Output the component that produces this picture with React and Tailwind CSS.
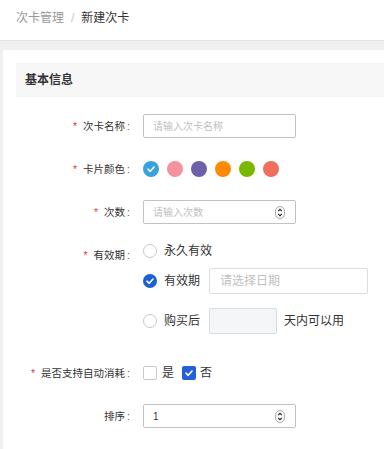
import React from "react";

const font = { fontFamily: '"Liberation Sans", "Noto Sans CJK SC", sans-serif' };

function Spinner() {
  return (
    <svg width="10" height="13" viewBox="0 0 10 13" className="shrink-0">
      <rect x="0.5" y="0.5" width="9" height="12" rx="4.5" fill="#fafafa" stroke="#9a9a9a" strokeWidth="0.8" />
      <path d="M3.2 5 L5 3.3 L6.8 5" fill="none" stroke="#333" strokeWidth="1.1" />
      <path d="M3.2 8 L5 9.7 L6.8 8" fill="none" stroke="#333" strokeWidth="1.1" />
    </svg>
  );
}

function Check({ size = 10 }) {
  return (
    <svg width={size} height={size} viewBox="0 0 10 10">
      <path d="M2 5.2 L4.2 7.3 L8 3" fill="none" stroke="#fff" strokeWidth="1.6" strokeLinecap="round" strokeLinejoin="round" />
    </svg>
  );
}

function Label({ required, children, className = "" }) {
  return (
    <div className={"w-[128px] shrink-0 flex justify-end text-[10.5px] text-[#333] leading-[16px] pr-[1px] " + className}>
      {required && <span className="text-[#e5383b] mr-[6px]">*</span>}
      <span>{children}</span>
      <span className="ml-[2px] text-[#555]">:</span>
    </div>
  );
}

function Radio({ checked }) {
  return checked ? (
    <div className="w-[14px] h-[14px] rounded-full bg-[#1c5fd7] flex items-center justify-center shrink-0">
      <Check size={10} />
    </div>
  ) : (
    <div className="w-[14px] h-[14px] rounded-full border border-[#c8c8c8] bg-white shrink-0" />
  );
}

export default function App() {
  const colors = ["#37a2df", "#f4939d", "#6f5faa", "#ff8a00", "#7ab800", "#f26e5c"];
  return (
    <div className="w-full h-[449px] overflow-hidden bg-[#f0f0f0]" style={font}>
      <div className="h-[41px] bg-white border-b border-[#e3e3e3] flex items-center pl-[16px] text-[12px] pb-[5px]">
        <span className="text-[#999]">次卡管理</span>
        <span className="text-[#c4c4c4] mx-[7px]">/</span>
        <span className="text-[#333]">新建次卡</span>
      </div>
      <div className="pt-[9px] pl-[3px]">
        <div className="bg-white h-[420px] pt-[13px]">
          <div className="ml-[13px] h-[34px] bg-[#f7f7f7] flex items-center pl-[9px] text-[12px] font-bold text-[#333]">
            基本信息
          </div>

          {/* 次卡名称 */}
          <div className="mt-[17px] flex items-center gap-[12px] h-[24px]">
            <Label required>次卡名称</Label>
            <div className="w-[153px] h-[24px] border border-[#c2c2c2] rounded-[2px] flex items-center pl-[9px] text-[10px] text-[#c0c0c0]">
              请输入次卡名称
            </div>
          </div>

          {/* 卡片颜色 */}
          <div className="mt-[23px] flex items-center gap-[12px] h-[16px]">
            <Label required>卡片颜色</Label>
            <div className="flex gap-[8px]">
              {colors.map((c, i) => (
                <div key={c} className="w-[16px] h-[16px] rounded-full flex items-center justify-center" style={{ backgroundColor: c }}>
                  {i === 0 && <Check size={10} />}
                </div>
              ))}
            </div>
          </div>

          {/* 次数 */}
          <div className="mt-[23px] flex items-center gap-[12px] h-[24px]">
            <Label required>次数</Label>
            <div className="w-[153px] h-[24px] border border-[#c2c2c2] rounded-[2px] flex items-center justify-between pl-[9px] pr-[10px] text-[10px] text-[#c0c0c0]">
              <span>请输入次数</span>
              <Spinner />
            </div>
          </div>

          {/* 有效期 */}
          <div className="mt-[14px] flex items-start gap-[12px]">
            <Label required className="pt-[9px]">有效期</Label>
            <div className="flex flex-col">
              <div className="h-[26px] flex items-center gap-[7px] text-[12px] text-[#333]">
                <Radio />
                <span>永久有效</span>
              </div>
              <div className="mt-[4px] h-[26px] flex items-center text-[12px] text-[#333]">
                <Radio checked />
                <span className="ml-[7px]">有效期</span>
                <div className="ml-[9px] w-[159px] h-[26px] border border-[#dcdcdc] rounded-[2px] flex items-center pl-[10px] text-[12px] text-[#c0c0c0]">
                  请选择日期
                </div>
              </div>
              <div className="mt-[14px] h-[26px] flex items-center text-[12px] text-[#333]">
                <Radio />
                <span className="ml-[7px]">购买后</span>
                <div className="ml-[9px] w-[68px] h-[26px] border border-[#dcdcdc] rounded-[2px] bg-[#f5f6f8]" />
                <span className="ml-[7px]">天内可以用</span>
              </div>
            </div>
          </div>

          {/* 自动消耗 */}
          <div className="mt-[32px] flex items-center gap-[12px] h-[14px]">
            <Label required>是否支持自动消耗</Label>
            <div className="flex items-center text-[12px] text-[#333]">
              <div className="w-[14px] h-[14px] border border-[#c8c8c8] rounded-[2px] bg-white" />
              <span className="ml-[5px]">是</span>
              <div className="ml-[8px] w-[14px] h-[14px] rounded-[2px] bg-[#2461d9] flex items-center justify-center">
                <Check size={10} />
              </div>
              <span className="ml-[4px]">否</span>
            </div>
          </div>

          {/* 排序 */}
          <div className="mt-[24px] flex items-center gap-[12px] h-[24px]">
            <Label>排序</Label>
            <div className="w-[153px] h-[24px] border border-[#c2c2c2] rounded-[2px] flex items-center justify-between pl-[9px] pr-[10px] text-[10px] text-[#333]">
              <span>1</span>
              <Spinner />
            </div>
          </div>
        </div>
      </div>
    </div>
  );
}
